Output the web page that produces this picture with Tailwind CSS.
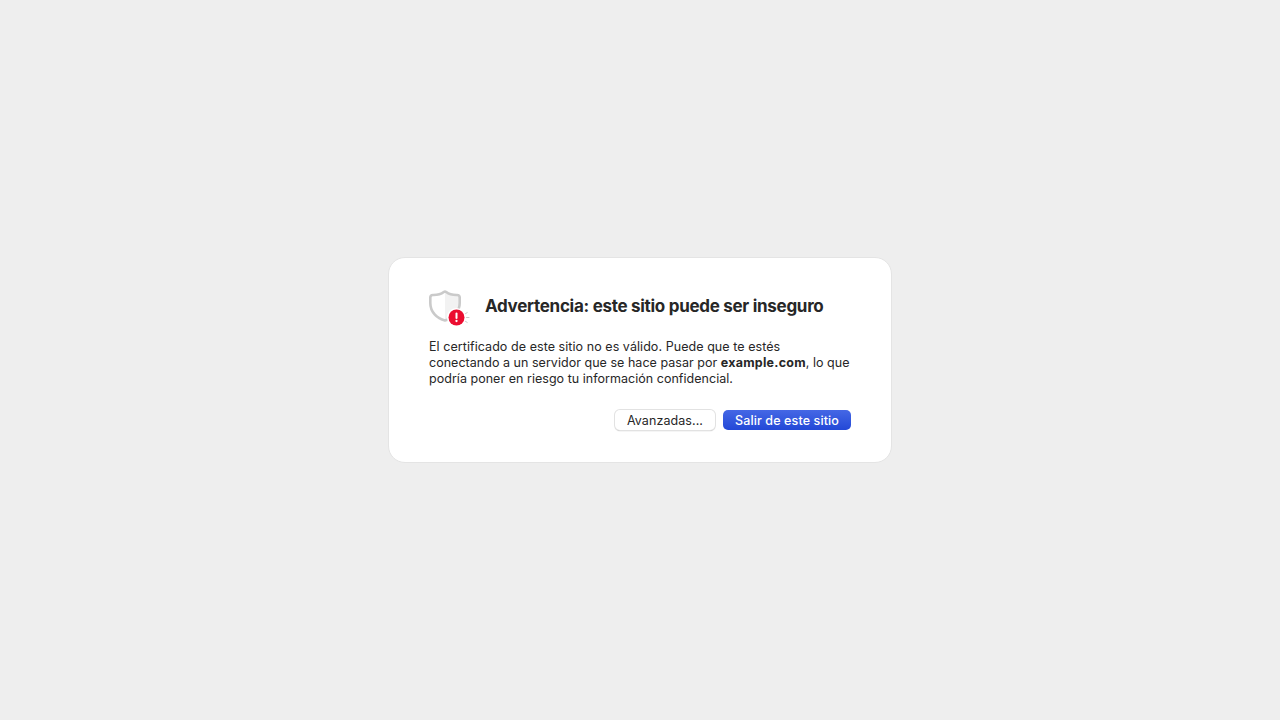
<!DOCTYPE html>
<html lang="es"><head><meta charset="utf-8"><title>Advertencia</title>
<script src="https://cdn.jsdelivr.net/npm/@tailwindcss/browser@4"></script></head>
<body class="bg-[#eeeeee] font-['Inter',sans-serif] text-[#272727]">
<div class="flex h-screen items-center justify-center">
<main class="h-[206px] w-[504px] rounded-[17px] border border-[#e4e4e4] bg-white px-10 pt-8">
<div class="flex h-8 items-center">
<svg class="h-10 w-10 shrink-0 self-start overflow-visible" viewBox="0 0 40 40" fill="none">
<path d="M16 1.5C19 4.5 23.5 5.2 28 5Q30.7 5 30.7 7.5V13C30.7 22 24 28.5 16 30.5Z" fill="#f2f2f2"/>
<path d="M14.8 2C12 4.2 8.5 5.1 4 5Q1.3 5 1.3 7.5V13C1.3 22 8 28.5 16 30.5C24 28.5 30.7 22 30.7 13V7.5Q30.7 5 28 5C23.5 5.1 20 4.2 17.2 2Q16 1.1 14.8 2Z" stroke="#cacaca" stroke-width="2.6" stroke-linejoin="round"/>
<circle cx="27.5" cy="27.5" r="9.6" fill="#fff"/><circle cx="27.5" cy="27.5" r="8" fill="#eb0d30"/>
<path d="M27.5 23.6V27.9" stroke="#fff" stroke-width="2" stroke-linecap="round"/><circle cx="27.5" cy="31" r="1.15" fill="#fff"/>
<path d="M37.5 27.5H40M36.5 23.6L38.2 22.6M36.5 31.4L38.2 32.4" stroke="#c8c8c8" stroke-width="1" stroke-linecap="round"/>
</svg>
<h1 class="ml-4 whitespace-nowrap text-[17px] font-bold leading-8 tracking-[-0.29px]">Advertencia: este sitio puede ser inseguro</h1>
</div>
<p class="mt-[17px] whitespace-nowrap text-[12.5px] leading-4"><span class="tracking-[0.06px]">El certificado de este sitio no es válido. Puede que te estés</span><br><span class="tracking-[0.03px]">conectando a un servidor que se hace pasar por <strong class="tracking-[0.24px]">example.com</strong>, lo que</span><br><span class="tracking-[0.03px]">podría poner en riesgo tu información confidencial.</span></p>
<div class="mt-[23px] flex justify-end gap-2">
<button class="h-5 w-[100px] rounded-[5px] bg-white text-[12.5px] leading-[21px] tracking-[0.08px] shadow-[0_0_0_1px_#e2e2e2,0_1px_1px_#999999]">Avanzadas...</button>
<button class="h-5 w-32 rounded-[5px] bg-linear-to-b from-[#4567e5] to-[#2348d7] text-[12.5px] font-medium leading-[21px] tracking-[0.12px] text-white">Salir de este sitio</button>
</div></main></div></body></html>
